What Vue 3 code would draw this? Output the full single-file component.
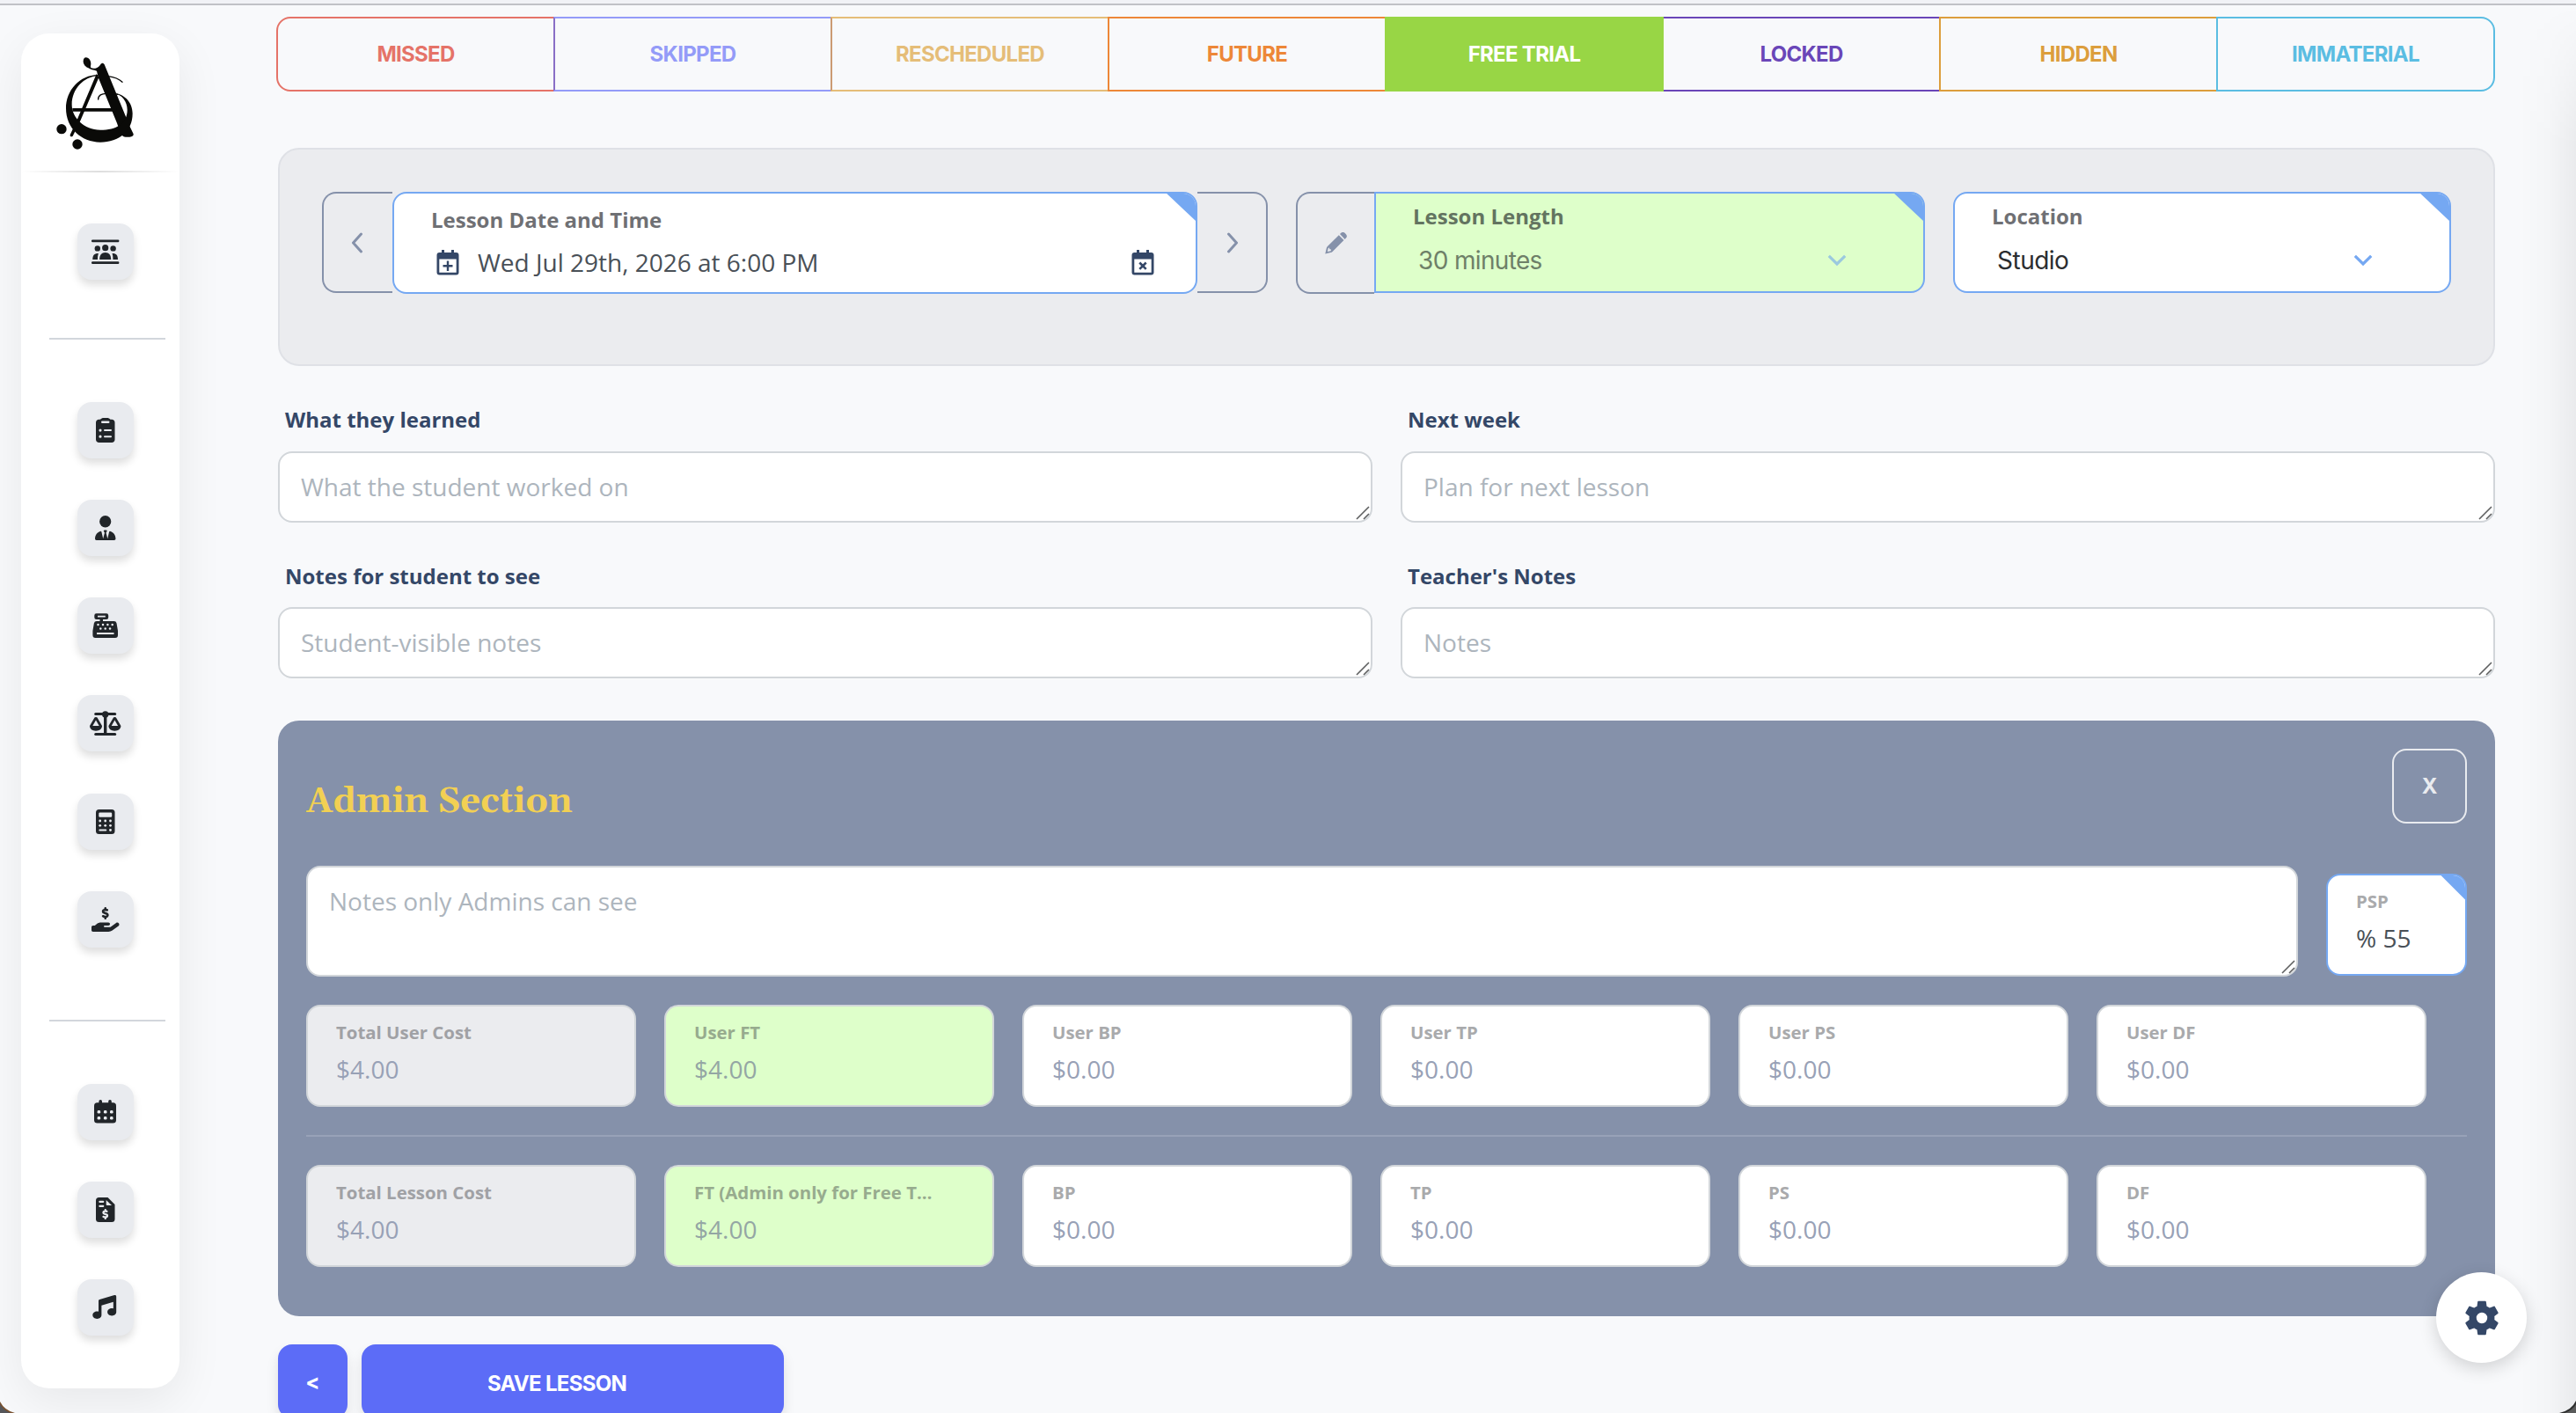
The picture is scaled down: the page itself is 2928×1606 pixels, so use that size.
<script setup>
const statuses = [
  { name: 'MISSED', color: '#e57368' },
  { name: 'SKIPPED', color: '#949bf8', seam: '#8a6fc6' },
  { name: 'RESCHEDULED', color: '#e5bd78', seam: '#cb9a72' },
  { name: 'FUTURE', color: '#ed8738' },
  { name: 'FREE TRIAL', color: '#98d645', active: true },
  { name: 'LOCKED', color: '#6a46b8' },
  { name: 'HIDDEN', color: '#dc9e3c' },
  { name: 'IMMATERIAL', color: '#5bbde2' }
]

const notes = [
  { label: 'What they learned', hint: 'What the student worked on' },
  { label: 'Next week', hint: 'Plan for next lesson' },
  { label: 'Notes for student to see', hint: 'Student-visible notes' },
  { label: "Teacher's Notes", hint: 'Notes' }
]

const costRows = [
  [
    { label: 'Total User Cost', value: '$4.00', tone: 'grey' },
    { label: 'User FT', value: '$4.00', tone: 'green' },
    { label: 'User BP', value: '$0.00' },
    { label: 'User TP', value: '$0.00' },
    { label: 'User PS', value: '$0.00' },
    { label: 'User DF', value: '$0.00' }
  ],
  [
    { label: 'Total Lesson Cost', value: '$4.00', tone: 'grey' },
    { label: 'FT (Admin only for Free T…', value: '$4.00', tone: 'green' },
    { label: 'BP', value: '$0.00' },
    { label: 'TP', value: '$0.00' },
    { label: 'PS', value: '$0.00' },
    { label: 'DF', value: '$0.00' }
  ]
]

const dollar =
  'M312 24V34.5c6.4 1.2 12.6 2.7 18.2 4.2c12.8 3.4 20.4 16.6 17 29.4s-16.6 20.4-29.4 17c-10.9-2.9-21.1-4.9-30.2-5c-7.3-.1-14.7 1.7-19.4 4.4c-2.1 1.3-3.1 2.4-3.5 3c-.3 .5-.7 1.2-.7 2.8c0 .3 0 .5 0 .6c.2 .2 .9 1.2 3.3 2.6c5.8 3.5 14.4 6.2 27.4 10.1l.9 .3c11.1 3.3 25.9 7.8 37.9 15.3c13.7 8.6 26.1 22.9 26.4 44.9c.3 22.5-11.4 38.9-26.7 48.5c-6.7 4.1-13.9 7-21.3 8.8V232c0 13.3-10.7 24-24 24s-24-10.7-24-24V220.6c-9.5-2.3-18.2-5.3-25.6-7.8c-2.1-.7-4.1-1.4-6-2c-12.6-4.2-19.4-17.8-15.2-30.4s17.8-19.4 30.4-15.2c2.6 .9 5 1.7 7.3 2.5c13.6 4.6 23.4 7.9 33.9 8.3c8 .3 15.1-1.6 19.2-4.1c1.9-1.2 2.8-2.2 3.2-2.9c.4-.6 .9-1.8 .8-4.1l0-.2c0-1 0-2.1-4-4.6c-5.7-3.6-14.3-6.4-27.1-10.3l-1.9-.6c-10.8-3.2-25-7.5-36.4-14.4c-13.5-8.1-26.5-22-26.6-44.1c-.1-22.9 12.9-38.6 27.7-47.4c6.4-3.8 13.3-6.4 20.2-8.2V24c0-13.3 10.7-24 24-24s24 10.7 24 24z'
</script>

<template>
  <div class="window">
    <div class="top-edge"></div>
    <div class="page">
      <aside class="sidebar">
        <div class="brand">
          <svg class="logo" width="90" height="108" viewBox="190 190 270 324" fill="#0a0a08">
            <path d="M291 194C302 194 309 206 308 217C307 222 306 226 308 229C316 234 330 232 340 219C344 212 350 211 354 218L441 430L453 455C454 461 450 464 440 465C430 466 420 466 415 460C405 440 402 432 397 418L333 262L328 240C318 236 306 236 298 229C287 225 281 214 282 205C283 198 286 194 291 194Z" />
            <path d="M327 250L335 262L272 410L246 462C242 466 236 464 237 458L262 404Z" />
            <path d="M245 367H395V378H245Z" />
            <path d="M332 253C270 254 223 305 223 368C223 435 275 483 340 483C405 483 450 445 450 385C450 345 420 317 385 316C415 320 432 345 432 372C432 420 395 441 340 441C285 440 243 400 243 355C243 300 285 259 332 257Z" />
            <path d="M366 258C388 261 405 268 415 278M333 337C332 324 345 316 362 317C372 317 385 315 400 320" fill="none" stroke="#0a0a08" stroke-width="4" stroke-linecap="round" />
            <circle cx="208" cy="438" r="17" />
            <circle cx="262" cy="490" r="17" />
          </svg>
        </div>
        <div class="fade-line"></div>

        <nav class="group group-a">
          <a class="tile">
            <svg viewBox="0 0 64 64">
              <rect x="16" y="18.4" width="31.4" height="2.8" rx="1.2" />
              <rect x="16" y="43.2" width="31.4" height="2.8" rx="1.2" />
              <circle cx="31.7" cy="27.7" r="3.6" />
              <circle cx="22.8" cy="28.4" r="3.2" />
              <circle cx="40.6" cy="28.4" r="3.2" />
              <path d="M25.2 40.9C25.2 36 27.5 33 31.7 33S38.2 36 38.2 40.9ZM17.3 40.9C17.3 36.5 19 33.9 23.9 34C23.3 36 22.9 38 23 40.9ZM46 40.9C46 36.5 44.4 33.9 39.5 34C40.1 36 40.5 38 40.4 40.9Z" />
            </svg>
          </a>
        </nav>
        <div class="rule"></div>

        <nav class="group group-b">
          <a class="tile">
            <svg viewBox="0 0 64 64">
              <path fill-rule="evenodd" d="M24.5 19.7H26C27 18.5 28.3 18 30 18H33.6C35.2 18 36.6 18.5 37.5 19.7H39C41 19.7 42.5 21.2 42.5 23.2V42.5C42.5 44.5 41 46 39 46H24.5C22.5 46 21 44.5 21 42.5V23.2C21 21.2 22.5 19.7 24.5 19.7ZM28.3 21.4A1.3 1.3 0 0 0 28.3 24H35.2A1.3 1.3 0 0 0 35.2 21.4ZM26 30.5A1.6 1.6 0 1 0 26 33.7A1.6 1.6 0 1 0 26 30.5ZM31 31.1A1 1 0 0 0 31 33.1H38A1 1 0 0 0 38 31.1ZM26 37.6A1.6 1.6 0 1 0 26 40.8A1.6 1.6 0 1 0 26 37.6ZM31 38.2A1 1 0 0 0 31 40.2H38A1 1 0 0 0 38 38.2Z" />
            </svg>
          </a>
          <a class="tile">
            <svg viewBox="0 0 64 64">
              <ellipse cx="31.7" cy="24.7" rx="6.6" ry="6.7" />
              <path transform="translate(20 18) scale(.0524 .0545)" d="M190.5 328.2l18.6 31L175.8 483.1l-36-146.9c-2-8.1-9.8-13.4-17.9-11.3C51.9 342.4 0 405.8 0 481.3c0 17 13.8 30.7 30.7 30.7H417.3c17 0 30.7-13.8 30.7-30.7c0-75.5-51.9-138.9-121.9-156.4c-8.1-2-15.9 3.3-17.9 11.3l-36 146.9L238.9 359.2l18.6-31c6.4-10.7-1.3-24.2-13.7-24.2H204.3c-12.4 0-20.1 13.6-13.7 24.2z" />
            </svg>
          </a>
          <a class="tile">
            <svg viewBox="0 0 64 64">
              <path fill-rule="evenodd" d="M21.5 18.2H33A2.3 2.3 0 0 1 35.2 20.5V22.8A2.3 2.3 0 0 1 33 25.1H29V27H41.5A3 3 0 0 1 44.5 29.3L46 38V43A3 3 0 0 1 43 46H20.4A3 3 0 0 1 17.4 43V38L18.9 29.3A3 3 0 0 1 21.9 27H25.5V25.1H21.5A2.3 2.3 0 0 1 19.3 22.8V20.5A2.3 2.3 0 0 1 21.5 18.2ZM23 20.8V22.4H31.8V20.8ZM22 39.9V42H41.5V39.9Z" />
              <g class="cut">
                <circle v-for="x in [23.5, 29, 34.4, 39.7]" :key="x" :cx="x" cy="31" r="1.25" />
                <circle v-for="x in [26.3, 31.7, 37]" :key="x" :cx="x" cy="35.6" r="1.25" />
              </g>
            </svg>
          </a>
          <a class="tile">
            <svg viewBox="0 0 64 64">
              <circle cx="31.7" cy="22" r="3.7" />
              <path d="M30 22H33.4V45H30Z" />
              <rect x="19.2" y="20" width="25" height="3" rx="1.5" />
              <rect x="19.2" y="43" width="25" height="3" rx="1.5" />
              <path fill-rule="evenodd" d="M19.5 25.5C20.2 24.7 21.8 24.7 22.5 25.5L28 35C28 38.5 25 40.7 21 40.7S14 38.5 14 35ZM21 28.5L17.3 35H24.7ZM41 25.5C41.7 24.7 43.2 24.7 43.9 25.5L49.4 35C49.4 38.5 46.4 40.7 42.4 40.7S35.4 38.5 35.4 35ZM42.4 28.5L38.7 35H46.1Z" />
            </svg>
          </a>
          <a class="tile">
            <svg viewBox="0 0 64 64">
              <rect x="21" y="18" width="21.5" height="28" rx="3.5" />
              <g class="cut">
                <rect x="24.3" y="21.5" width="14.9" height="5.2" rx="1.3" />
                <circle v-for="n in 6" :key="n" :cx="[25.7, 31.7, 37.5][(n - 1) % 3]" :cy="n > 3 ? 36.3 : 31" r="1.4" />
                <rect x="24.3" y="40.4" width="9" height="2.2" rx="1.1" />
                <circle cx="37.5" cy="41.5" r="1.4" />
              </g>
            </svg>
          </a>
          <a class="tile">
            <svg viewBox="0 0 64 64">
              <g transform="translate(16 18) scale(.0547)">
                <path :d="dollar" />
                <path d="M568.2 336.3c13.1 17.8 9.3 42.8-8.5 55.9L433.1 485.5c-23.4 17.2-51.6 26.5-80.7 26.5H32c-17.7 0-32-14.3-32-32V416c0-17.7 14.3-32 32-32H68.8l44.9-36c22.7-18.2 50.9-28 80-28H352c17.7 0 32 14.3 32 32s-14.3 32-32 32H272c-8.8 0-16 7.2-16 16s7.2 16 16 16H392.6l119.7-88.2c17.8-13.1 42.8-9.3 55.9 8.5z" />
              </g>
            </svg>
          </a>
        </nav>
        <div class="rule"></div>

        <nav class="group group-c">
          <a class="tile">
            <svg viewBox="0 0 64 64">
              <rect x="19" y="21.3" width="25" height="23.2" rx="3.5" />
              <rect x="24.4" y="18" width="3.6" height="6" rx="1.8" />
              <rect x="35.2" y="18" width="3.6" height="6" rx="1.8" />
              <g class="cut">
                <rect v-for="n in 6" :key="n" :x="[22.6, 29.9, 37][(n - 1) % 3]" :y="n > 3 ? 37 : 30" width="3.6" height="3.6" rx="1.4" />
              </g>
            </svg>
          </a>
          <a class="tile">
            <svg viewBox="0 0 64 64">
              <path d="M24.5 18H34.5L42.5 26V42.5A3.5 3.5 0 0 1 39 46H24.5A3.5 3.5 0 0 1 21 42.5V21.5A3.5 3.5 0 0 1 24.5 18Z" />
              <g class="cut">
                <path d="M32.7 21V26A1 1 0 0 0 33.7 27H39Z" />
                <rect x="24.3" y="21.7" width="6" height="2.3" rx="1.1" />
                <rect x="24.3" y="26.7" width="6" height="2.3" rx="1.1" />
                <path transform="translate(18.2 31) scale(.047)" :d="dollar" />
              </g>
            </svg>
          </a>
          <a class="tile">
            <svg viewBox="0 0 64 64">
              <path transform="translate(17.3 18) scale(.0525)" d="M499.1 6.3c8.1 6 12.9 15.6 12.9 25.7V368c0 44.2-43 80-96 80s-96-35.8-96-80s43-80 96-80c11.2 0 22 1.6 32 4.6V147L192 223.8V432c0 44.2-43 80-96 80s-96-35.8-96-80s43-80 96-80c11.2 0 22 1.6 32 4.6V128c0-14.1 9.3-26.6 22.8-30.7l320-96c9.7-2.9 20.2-1.1 28.3 5z" />
            </svg>
          </a>
        </nav>
      </aside>

      <main class="main">
        <div class="statuses">
          <button
            v-for="s in statuses"
            :key="s.name"
            class="status"
            :class="{ active: s.active }"
            :style="{ '--tone': s.color, '--seam': s.seam || s.color }"
          >{{ s.name }}</button>
        </div>

        <section class="schedule">
          <button class="step step-left">
            <svg width="14" height="24" viewBox="0 0 14 24"><path d="M11.5 2L2.5 12L11.5 22" /></svg>
          </button>
          <div class="field date">
            <span class="corner"></span>
            <div class="label">Lesson Date and Time</div>
            <div class="date-line">
              <svg width="26" height="29" viewBox="0 0 26 29">
                <path d="M6 0H9V3H17V0H20V3H22.5A3 3 0 0 1 25.5 6V25.5A3 3 0 0 1 22.5 28.5H3.5A3 3 0 0 1 .5 25.5V6A3 3 0 0 1 3.5 3H6ZM3.3 10.5V25.7H22.7V10.5ZM11.8 12.5H14.2V17H18.5V19.4H14.2V24H11.8V19.4H7.5V17H11.8Z" fill-rule="evenodd" />
              </svg>
              <span class="value">Wed Jul 29th, 2026 at 6:00 PM</span>
              <svg class="clear" width="26" height="29" viewBox="0 0 26 29">
                <path d="M6 0H9V3H17V0H20V3H22.5A3 3 0 0 1 25.5 6V25.5A3 3 0 0 1 22.5 28.5H3.5A3 3 0 0 1 .5 25.5V6A3 3 0 0 1 3.5 3H6ZM3.3 10.5V25.7H22.7V10.5Z" fill-rule="evenodd" />
                <path d="M9.3 14.5L16.7 21.9M16.7 14.5L9.3 21.9" fill="none" stroke="#344767" stroke-width="2.6" />
              </svg>
            </div>
          </div>
          <button class="step step-right">
            <svg width="14" height="24" viewBox="0 0 14 24"><path d="M2.5 2L11.5 12L2.5 22" /></svg>
          </button>
          <button class="step edit">
            <svg width="25" height="25" viewBox="0 0 25 25">
              <path class="solid" fill-rule="evenodd" d="M17 2L18 1A3.4 3.4 0 0 1 22.8 1L23.7 2A3.4 3.4 0 0 1 23.7 6.8L22.6 8ZM15.8 3.2L21.5 9L8.6 21.9C8 22.5 7.3 22.9 6.5 23.1L.3 24.6L1.7 18.3C1.9 17.4 2.3 16.7 2.9 16.1ZM3.8 18L2.8 22L6.7 21.2L7 19.4L5.2 19.2L5 17.5Z" />
            </svg>
          </button>
          <div class="field length">
            <span class="corner"></span>
            <div class="label">Lesson Length</div>
            <div class="select">
              <span>30 minutes</span>
              <svg width="22" height="14" viewBox="0 0 22 14"><path d="M1.8 1.8L11 11L20.2 1.8" /></svg>
            </div>
          </div>
          <div class="field location">
            <span class="corner"></span>
            <div class="label">Location</div>
            <div class="select">
              <span>Studio</span>
              <svg width="22" height="14" viewBox="0 0 22 14"><path d="M1.8 1.8L11 11L20.2 1.8" /></svg>
            </div>
          </div>
        </section>

        <section class="notes">
          <div v-for="n in notes" :key="n.label" class="note">
            <div class="note-label">{{ n.label }}</div>
            <div class="area">
              {{ n.hint }}
              <svg class="grip" width="16" height="16" viewBox="0 0 16 16"><path d="M1 15L15 1M9 15L15 9" /></svg>
            </div>
          </div>
        </section>

        <section class="admin">
          <header class="admin-head">
            <h2>Admin Section</h2>
            <button class="close">X</button>
          </header>
          <div class="admin-notes">
            <div class="area tall">
              Notes only Admins can see
              <svg class="grip" width="16" height="16" viewBox="0 0 16 16"><path d="M1 15L15 1M9 15L15 9" /></svg>
            </div>
            <div class="cost psp">
              <span class="corner"></span>
              <div class="cost-label">PSP</div>
              <div class="cost-value">% 55</div>
            </div>
          </div>
          <template v-for="(row, i) in costRows" :key="i">
            <div v-if="i" class="divider"></div>
            <div class="costs">
              <div v-for="c in row" :key="c.label" class="cost" :class="c.tone">
                <div class="cost-label">{{ c.label }}</div>
                <div class="cost-value">{{ c.value }}</div>
              </div>
            </div>
          </template>
        </section>

        <footer class="actions">
          <button class="primary back">&lt;</button>
          <button class="primary save">SAVE LESSON</button>
        </footer>
      </main>
    </div>

    <div class="edge-shade"></div>
    <button class="fab">
      <svg width="48" height="48" viewBox="0 0 24 24">
        <path fill-rule="evenodd" d="M19.14 12.94c.04-.3.06-.61.06-.94 0-.32-.02-.64-.07-.94l2.03-1.58c.18-.14.23-.41.12-.61l-1.92-3.32c-.12-.22-.37-.29-.59-.22l-2.39.96c-.5-.38-1.03-.7-1.62-.94l-.36-2.54c-.04-.24-.24-.41-.48-.41h-3.84c-.24 0-.43.17-.47.41l-.36 2.54c-.59.24-1.13.57-1.62.94l-2.39-.96c-.22-.08-.47 0-.59.22L2.74 8.87c-.12.21-.08.47.12.61l2.03 1.58c-.05.3-.09.63-.09.94s.02.64.07.94l-2.03 1.58c-.18.14-.23.41-.12.61l1.92 3.32c.12.22.37.29.59.22l2.39-.96c.5.38 1.03.7 1.62.94l.36 2.54c.05.24.24.41.48.41h3.84c.24 0 .44-.17.47-.41l.36-2.54c.59-.24 1.13-.56 1.62-.94l2.39.96c.22.08.47 0 .59-.22l1.92-3.32c.12-.22.07-.47-.12-.61l-2.01-1.58zM12 8.9a3.1 3.1 0 1 0 0 6.2a3.1 3.1 0 1 0 0-6.2z" />
      </svg>
    </button>
    <svg class="window-corner left" width="20" height="20" viewBox="0 0 20 20">
      <path d="M0 7Q5 17 17 20H0Z" fill="#7a5230" />
      <path d="M0 10Q4 17 12 20H0Z" fill="#55565a" />
    </svg>
    <svg class="window-corner right" width="20" height="20" viewBox="0 0 20 20">
      <path d="M20 6Q15 17 1 20H20Z" fill="#2c2d2d" />
      <path d="M20 10Q16 17 7 20H20Z" fill="#5a5b5b" />
    </svg>
  </div>
</template>

<style>
body {
  margin: 0;
  background: #f8f9fb;
}
</style>

<style scoped>
* {
  box-sizing: border-box;
}
.window {
  position: relative;
  width: 2928px;
  height: 1606px;
  overflow: hidden;
  background: #f8f9fb;
  font-family: 'Open Sans', 'Noto Sans', sans-serif;
}
button {
  margin: 0;
  padding: 0;
  font-family: Inter, 'Liberation Sans', sans-serif;
  background: none;
}
.top-edge {
  height: 6px;
  background: #f1f2f6;
  border-bottom: 2px solid #c0c1c6;
}
.page {
  display: flex;
  align-items: flex-start;
}

/* sidebar */
.sidebar {
  flex: none;
  width: 180px;
  height: 1540px;
  margin: 32px 0 0 24px;
  border-radius: 32px;
  background: #fff;
  box-shadow: 0 16px 54px rgba(0, 0, 0, 0.07);
}
.brand {
  height: 156px;
  padding: 26px 0 0 40px;
}
.logo {
  display: block;
}
.fade-line {
  height: 2px;
  background: linear-gradient(90deg, rgba(0, 0, 0, 0), rgba(0, 0, 0, 0.13), rgba(0, 0, 0, 0));
}
.group {
  display: flex;
  flex-direction: column;
  padding-left: 64px;
}
.group-a {
  padding-top: 58px;
  padding-bottom: 66px;
}
.group-b {
  gap: 47px;
  padding-top: 71px;
  padding-bottom: 82px;
}
.group-b .tile:nth-child(5) {
  margin-top: 1px;
}
.group-c {
  gap: 47px;
  padding-top: 71px;
}
.tile {
  width: 64px;
  height: 64px;
  border-radius: 16px;
  background: #e9ebef;
  box-shadow: 0 6px 10px rgba(0, 0, 0, 0.13);
}
.tile svg {
  display: block;
  fill: #212529;
}
.cut {
  fill: #e9ebef;
}
.rule {
  width: 132px;
  height: 2px;
  margin-left: 32px;
  background: #d2d6dc;
}

/* main column */
.main {
  flex: none;
  width: 2522px;
  margin-left: 110px;
  padding-top: 13px;
}
.statuses {
  display: flex;
  height: 85px;
}
.status {
  flex: none;
  width: 317px;
  margin-right: -2px;
  border: 2px solid var(--tone);
  border-left-color: var(--seam);
  color: var(--tone);
  font-size: 24px;
  line-height: 30px;
  font-weight: 700;
  letter-spacing: -0.7px;
}
.status:first-child {
  border-radius: 16px 0 0 16px;
}
.status:last-child {
  border-radius: 0 16px 16px 0;
}
.status.active {
  position: relative;
  background: var(--tone);
  color: #fff;
}

.schedule {
  display: flex;
  align-items: flex-start;
  height: 248px;
  margin: 64px 0 0 2px;
  padding: 48px 0 0 48px;
  border: 2px solid #dfe1e6;
  border-radius: 24px;
  background: #ebecef;
}
.step {
  display: flex;
  align-items: center;
  justify-content: center;
  height: 115px;
  width: 80px;
  border: 2px solid #8591aa;
}
.step svg {
  fill: none;
  stroke: #8591aa;
  stroke-width: 3;
  stroke-linecap: round;
  stroke-linejoin: round;
}
.step .solid {
  fill: #8591aa;
  stroke: none;
}
.step-left {
  padding-right: 2px;
  border-right: 0;
  border-radius: 16px 0 0 16px;
}
.step-right {
  padding-left: 2px;
  border-left: 0;
  border-radius: 0 16px 16px 0;
}
.edit {
  width: 89px;
  height: 116px;
  margin-left: 32px;
  border-right: 0;
  border-radius: 16px 0 0 16px;
}
.field {
  position: relative;
  height: 115px;
  border: 2px solid #75a8f2;
  border-radius: 16px;
  background: #fff;
  overflow: hidden;
}
.corner {
  position: absolute;
  top: -2px;
  right: -2px;
  width: 37px;
  height: 35px;
  background: #75a8f2;
  clip-path: polygon(0 0, 100% 0, 100% 100%);
}
.label {
  font-size: 24px;
  line-height: 32px;
  font-weight: 700;
  color: #6f7074;
}
.date {
  width: 915px;
  height: 116px;
  padding: 14px 0 0 42px;
}
.date-line {
  display: flex;
  align-items: center;
  height: 38px;
  margin-top: 13px;
  padding: 0 47px 0 6px;
}
.date-line svg {
  fill: #344767;
}
.value {
  margin-left: 21px;
  font-size: 28px;
  line-height: 38px;
  color: #495057;
}
.clear {
  margin-left: auto;
}
.length {
  width: 626px;
  padding: 10px 0 0 42px;
  border-radius: 0 16px 16px 0;
  background: #deffca;
}
.length .label {
  color: #637460;
}
.location {
  width: 566px;
  margin-left: 32px;
  padding: 10px 0 0 42px;
}
.select {
  display: flex;
  align-items: center;
  justify-content: space-between;
  margin-top: 17px;
  padding: 0 87px 0 6px;
  font-family: Inter, 'Liberation Sans', sans-serif;
  font-size: 28px;
  line-height: 34px;
  letter-spacing: -0.5px;
  color: #2b2d30;
}
.select svg {
  fill: none;
  stroke: #75a8f2;
  stroke-width: 3.2;
}
.length .select {
  color: #6e8068;
  letter-spacing: -0.65px;
}
.length .select svg {
  stroke: #9bc9df;
}

.notes {
  display: grid;
  grid-template-columns: 1244px 1244px;
  gap: 44px 32px;
  margin: 45px 0 0 2px;
}
.note-label {
  margin-bottom: 20px;
  padding-left: 8px;
  font-size: 24px;
  line-height: 32px;
  font-weight: 700;
  color: #344767;
}
.note:nth-child(n + 3) .note-label {
  margin-top: 1px;
}
.area {
  position: relative;
  height: 81px;
  padding: 19px 24px;
  border: 2px solid #d2d6da;
  border-radius: 16px;
  background: #fff;
  font-size: 28px;
  line-height: 38px;
  color: #adb5bd;
}
.note:nth-child(n + 3) .note-label {
  margin-bottom: 19px;
}
.grip {
  position: absolute;
  right: 1px;
  bottom: 1px;
  fill: none;
  stroke: #5f6061;
  stroke-width: 1.6;
}

/* admin */
.admin {
  height: 677px;
  margin: 48px 0 0 2px;
  padding: 32px 32px 0;
  border-radius: 24px;
  background: #8591aa;
}
.admin-head {
  display: flex;
  justify-content: space-between;
  height: 133px;
}
h2 {
  margin: 36px 0 0;
  font-family: Gelasio, Georgia, 'Liberation Serif', serif;
  font-size: 40px;
  line-height: 50px;
  font-weight: 700;
  color: #f2d053;
}
.close {
  width: 85px;
  height: 85px;
  border: 2px solid #e9ebef;
  border-radius: 16px;
  font-size: 24px;
  font-weight: 700;
  color: #e9ebef;
}
.admin-notes {
  display: flex;
  justify-content: space-between;
  align-items: center;
  height: 126px;
  margin-bottom: 32px;
}
.tall {
  width: 2264px;
  height: 126px;
}
.costs {
  display: flex;
  gap: 32px;
}
.cost {
  position: relative;
  width: 375px;
  height: 116px;
  padding: 15px 32px 0;
  border: 2px solid #d2d6da;
  border-radius: 16px;
  background: #fff;
  overflow: hidden;
}
.cost-label {
  font-size: 20.4px;
  line-height: 28px;
  font-weight: 700;
  color: #a9aaac;
  white-space: nowrap;
}
.cost-value {
  margin-top: 9px;
  font-size: 28px;
  line-height: 38px;
  color: #98a1b6;
}
.grey {
  background: #ebecef;
}
.grey .cost-label {
  color: #a0a1a5;
}
.green {
  background: #deffca;
}
.green .cost-label {
  color: #97ab8e;
}
.green .cost-value {
  color: #94a6a4;
}
.psp {
  width: 160px;
  margin-top: 7px;
  border-color: #75a8f2;
}
.psp .corner {
  width: 32px;
  height: 32px;
}
.psp .cost-value {
  color: #495057;
}
.divider {
  height: 2px;
  margin: 32px 0;
  background: #98a2b8;
}

.actions {
  display: flex;
  gap: 16px;
  margin: 32px 0 0 2px;
}
.primary {
  height: 84px;
  border: 0;
  border-radius: 16px;
  background: #5c6cf7;
  box-shadow: 0 8px 14px rgba(0, 0, 0, 0.1);
  color: #fff;
  font-size: 24px;
  font-weight: 700;
}
.back {
  width: 79px;
}
.save {
  width: 480px;
  padding: 4px 36px 0 0;
  letter-spacing: -0.7px;
}

/* overlays */
.edge-shade {
  position: absolute;
  top: 6px;
  right: 0;
  bottom: 0;
  width: 64px;
  background: linear-gradient(90deg, rgba(0, 0, 0, 0), rgba(0, 0, 0, 0.015) 50%, rgba(0, 0, 0, 0.055));
  mask-image: linear-gradient(180deg, transparent, #000 160px);
}
.fab {
  position: absolute;
  left: 2769px;
  top: 1446px;
  display: flex;
  align-items: center;
  justify-content: center;
  width: 103px;
  height: 103px;
  border: 0;
  border-radius: 50%;
  background: #fff;
  box-shadow: 0 6px 20px rgba(0, 0, 0, 0.16);
}
.fab svg {
  fill: #344767;
}
.window-corner {
  position: absolute;
  bottom: 0;
}
.window-corner.left {
  left: 0;
}
.window-corner.right {
  right: 0;
}
</style>
